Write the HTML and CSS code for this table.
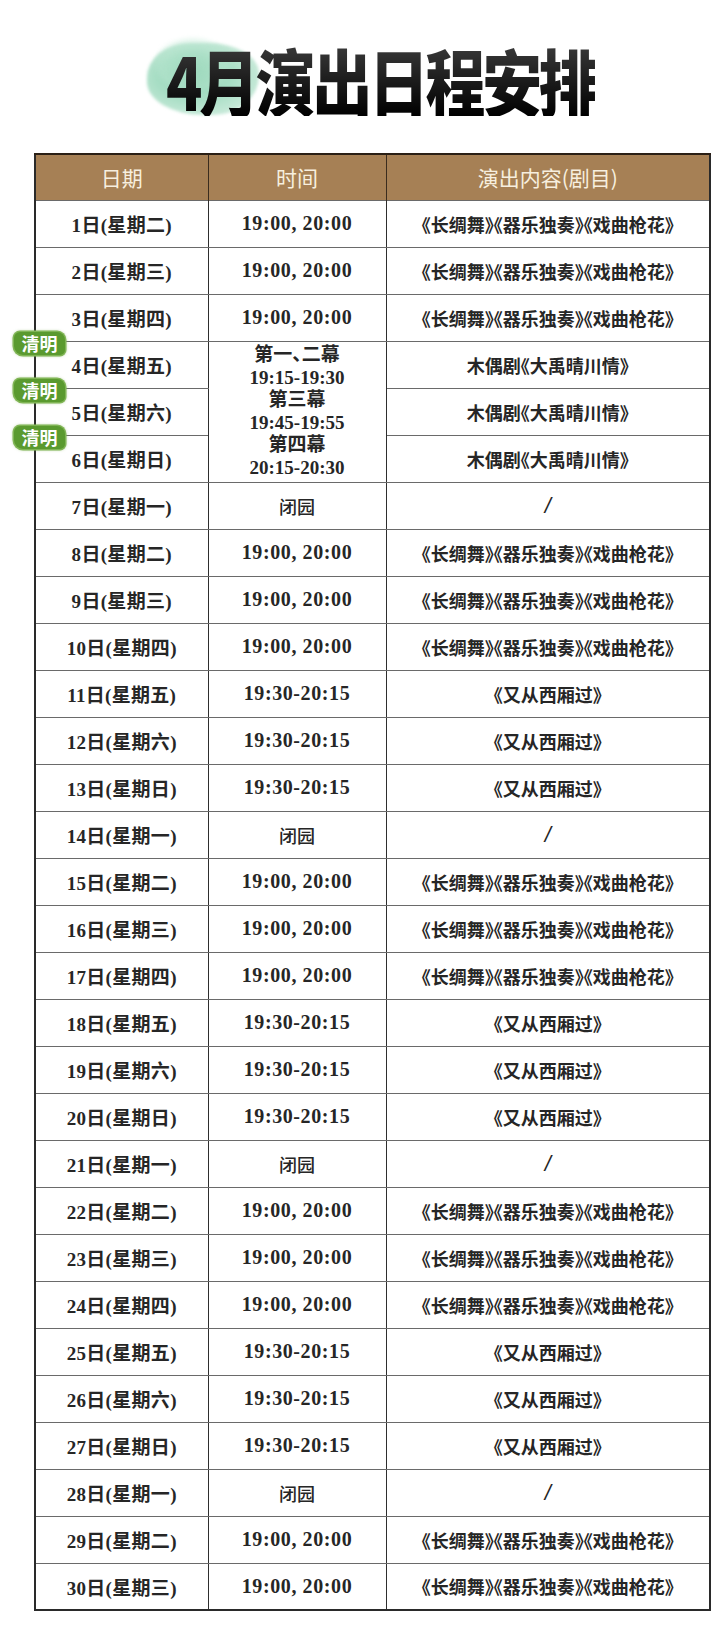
FILE: index.html
```html
<!DOCTYPE html>
<html lang="zh-CN">
<head>
<meta charset="utf-8">
<title>4月演出日程安排</title>
<link rel="stylesheet" href="styles.css">
</head>
<body>
<div class="page">
  <header class="title-wrap">
    <div class="title">
      <span class="blob"></span>
      <span class="blob blob2"></span>
      <h1 class="title-text">4月演出日程安排</h1>
    </div>
  </header>

  <div class="table-wrap">
    <span class="badge b1">清明</span>
    <span class="badge b2">清明</span>
    <span class="badge b3">清明</span>
    <table class="schedule">
      <thead>
        <tr><th class="c1">日期</th><th class="c2">时间</th><th class="c3">演出内容(剧目)</th></tr>
      </thead>
      <tbody>
        <tr><td class="d">1日(星期二)</td><td class="t">19:00, 20:00</td><td>《长绸舞》《器乐独奏》《戏曲枪花》</td></tr>
        <tr><td class="d">2日(星期三)</td><td class="t">19:00, 20:00</td><td>《长绸舞》《器乐独奏》《戏曲枪花》</td></tr>
        <tr><td class="d">3日(星期四)</td><td class="t">19:00, 20:00</td><td>《长绸舞》《器乐独奏》《戏曲枪花》</td></tr>
        <tr><td class="d">4日(星期五)</td><td class="t multi" rowspan="3"><span>第一、二幕</span><span>19:15-19:30</span><span>第三幕</span><span>19:45-19:55</span><span>第四幕</span><span>20:15-20:30</span></td><td>木偶剧《大禹晴川情》</td></tr>
        <tr><td class="d">5日(星期六)</td><td>木偶剧《大禹晴川情》</td></tr>
        <tr><td class="d">6日(星期日)</td><td>木偶剧《大禹晴川情》</td></tr>
        <tr><td class="d">7日(星期一)</td><td class="closed">闭园</td><td class="slash">/</td></tr>
        <tr><td class="d">8日(星期二)</td><td class="t">19:00, 20:00</td><td>《长绸舞》《器乐独奏》《戏曲枪花》</td></tr>
        <tr><td class="d">9日(星期三)</td><td class="t">19:00, 20:00</td><td>《长绸舞》《器乐独奏》《戏曲枪花》</td></tr>
        <tr><td class="d">10日(星期四)</td><td class="t">19:00, 20:00</td><td>《长绸舞》《器乐独奏》《戏曲枪花》</td></tr>
        <tr><td class="d">11日(星期五)</td><td class="t">19:30-20:15</td><td>《又从西厢过》</td></tr>
        <tr><td class="d">12日(星期六)</td><td class="t">19:30-20:15</td><td>《又从西厢过》</td></tr>
        <tr><td class="d">13日(星期日)</td><td class="t">19:30-20:15</td><td>《又从西厢过》</td></tr>
        <tr><td class="d">14日(星期一)</td><td class="closed">闭园</td><td class="slash">/</td></tr>
        <tr><td class="d">15日(星期二)</td><td class="t">19:00, 20:00</td><td>《长绸舞》《器乐独奏》《戏曲枪花》</td></tr>
        <tr><td class="d">16日(星期三)</td><td class="t">19:00, 20:00</td><td>《长绸舞》《器乐独奏》《戏曲枪花》</td></tr>
        <tr><td class="d">17日(星期四)</td><td class="t">19:00, 20:00</td><td>《长绸舞》《器乐独奏》《戏曲枪花》</td></tr>
        <tr><td class="d">18日(星期五)</td><td class="t">19:30-20:15</td><td>《又从西厢过》</td></tr>
        <tr><td class="d">19日(星期六)</td><td class="t">19:30-20:15</td><td>《又从西厢过》</td></tr>
        <tr><td class="d">20日(星期日)</td><td class="t">19:30-20:15</td><td>《又从西厢过》</td></tr>
        <tr><td class="d">21日(星期一)</td><td class="closed">闭园</td><td class="slash">/</td></tr>
        <tr><td class="d">22日(星期二)</td><td class="t">19:00, 20:00</td><td>《长绸舞》《器乐独奏》《戏曲枪花》</td></tr>
        <tr><td class="d">23日(星期三)</td><td class="t">19:00, 20:00</td><td>《长绸舞》《器乐独奏》《戏曲枪花》</td></tr>
        <tr><td class="d">24日(星期四)</td><td class="t">19:00, 20:00</td><td>《长绸舞》《器乐独奏》《戏曲枪花》</td></tr>
        <tr><td class="d">25日(星期五)</td><td class="t">19:30-20:15</td><td>《又从西厢过》</td></tr>
        <tr><td class="d">26日(星期六)</td><td class="t">19:30-20:15</td><td>《又从西厢过》</td></tr>
        <tr><td class="d">27日(星期日)</td><td class="t">19:30-20:15</td><td>《又从西厢过》</td></tr>
        <tr><td class="d">28日(星期一)</td><td class="closed">闭园</td><td class="slash">/</td></tr>
        <tr><td class="d">29日(星期二)</td><td class="t">19:00, 20:00</td><td>《长绸舞》《器乐独奏》《戏曲枪花》</td></tr>
        <tr><td class="d">30日(星期三)</td><td class="t">19:00, 20:00</td><td>《长绸舞》《器乐独奏》《戏曲枪花》</td></tr>
      </tbody>
    </table>
  </div>
</div>
</body>
</html>
```

FILE: styles.css
```css
* { box-sizing: border-box; }

html, body {
  margin: 0;
  padding: 0;
  background: #ffffff;
}

body {
  font-family: "Liberation Serif", "Noto Sans CJK SC", serif;
  color: #1f1f1f;
}

.page {
  width: 727px;
  padding-bottom: 20px;
}

.title-wrap {
  height: 153px;
  display: flex;
  justify-content: center;
  align-items: flex-start;
  padding-top: 34px;
  padding-left: 34px;
}

.title {
  position: relative;
  width: 440px;
  height: 90px;
  display: flex;
  justify-content: center;
  align-items: center;
}

.blob {
  position: absolute;
  left: -14px;
  top: 9px;
  width: 112px;
  height: 72px;
  border-radius: 38% 46% 40% 50% / 48% 42% 55% 46%;
  background: radial-gradient(ellipse at 42% 48%, #97d6b9 0%, #a8dec5 42%, #c6e9d8 72%, rgba(228,245,237,0) 100%);
  filter: blur(1.5px);
}

.blob2 {
  left: -6px;
  top: 4px;
  width: 76px;
  height: 52px;
  border-radius: 50%;
  background: radial-gradient(ellipse at 50% 60%, rgba(160,218,190,0.7) 0%, rgba(185,230,208,0.45) 55%, rgba(232,247,240,0) 100%);
  filter: blur(2px);
}

.title-text {
  position: relative;
  margin: 0;
  font-family: "Noto Sans CJK SC", sans-serif;
  font-weight: 900;
  font-size: 73px;
  line-height: 1;
  letter-spacing: -4px;
  white-space: nowrap;
  transform: scaleX(0.82);
  background: linear-gradient(180deg, #3b3b3b 0%, #1a1a1a 55%, #000 100%);
  -webkit-background-clip: text;
  background-clip: text;
  color: transparent;
}

.table-wrap {
  position: relative;
  margin-left: 34px;
  width: 677px;
}

.schedule {
  width: 677px;
  border-collapse: collapse;
  table-layout: fixed;
  border: 2px solid #2a2a2a;
}

.schedule th {
  height: 46px;
  background: #a68055;
  color: #f7efdf;
  font-family: "Noto Sans CJK SC", serif;
  font-weight: 400;
  font-size: 21px;
  border-left: 1px solid #3a2c1e;
  border-right: 1px solid #3a2c1e;
  border-top: 2px solid #2a1f15;
  padding: 0;
}

.c1 { width: 173px; }
.c2 { width: 178px; }
.c3 { width: auto; }

.schedule td {
  height: 47px;
  padding: 0;
  text-align: center;
  vertical-align: middle;
  font-size: 18px;
  font-weight: 700;
  color: #262626;
  border-top: 1px solid #6a6a6a;
  border-bottom: 1px solid #6a6a6a;
  border-left: 1px solid #2e2e2e;
  border-right: 1px solid #2e2e2e;
  font-feature-settings: "halt";
  white-space: nowrap;
}

.schedule td.d {
  font-size: 19px;
  letter-spacing: 0.3px;
}

.schedule td.t {
  font-size: 20px;
  font-weight: 700;
  letter-spacing: 0.6px;
}

.schedule td.multi {
  font-size: 19px;
  line-height: 22.5px;
  letter-spacing: 0;
}

.multi span {
  display: block;
}

.schedule td.closed {
  font-weight: 500;
  font-size: 18px;
}

.schedule td.slash {
  font-family: "Liberation Sans", sans-serif;
  font-size: 22px;
  font-style: italic;
  font-weight: 400;
}

.badge {
  position: absolute;
  left: -20px;
  z-index: 2;
  width: 51px;
  height: 23px;
  border-radius: 6px 8px 5px 9px;
  background: #5a9a2f;
  box-shadow: 0 0 0 1.5px #80b555, 0 0 3px 1px rgba(120,170,80,0.6);
  color: #ffffff;
  font-family: "Noto Sans CJK SC", sans-serif;
  font-weight: 700;
  font-size: 18px;
  line-height: 23px;
  text-align: center;
  letter-spacing: 0;
}

.b1 { top: 179px; }
.b2 { top: 226px; }
.b3 { top: 273px; }
```
